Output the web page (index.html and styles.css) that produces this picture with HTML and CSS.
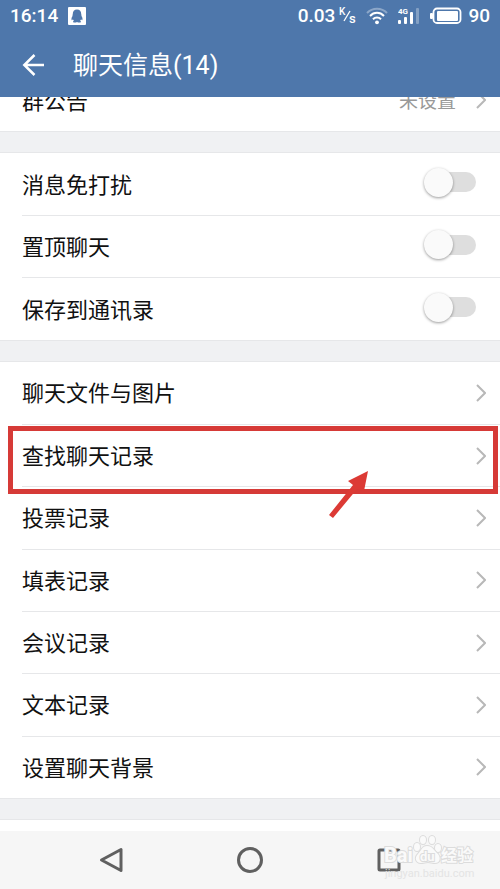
FILE: index.html
```
<!DOCTYPE html>
<html lang="zh-CN">
<head>
    <meta charset="UTF-8">
    <meta name="viewport" content="width=device-width, initial-scale=1.0">
    <title>聊天信息</title>
    <link rel="stylesheet" href="styles.css">
</head>
<body>

<header class="header">
  <div class="status-bar">
    <span>16:14</span>
    <svg class="qq" width="18" height="18" viewBox="0 0 18 18">
      <path fill="#fff" d="M1 0h16a1 1 0 0 1 1 1v16a1 1 0 0 1-1 1H1a1 1 0 0 1-1-1V1a1 1 0 0 1 1-1z"/>
      <path fill="#4e77ab" d="M9 2.500C6.200 2.500 4.700 4.500 4.800 7.100c-.3 1-.4 1.500-.2 2C3.500 10.500 3.200 12 3.700 13.200c.5 0 .8-.3 1.200-.9.2.6.6 1.100 1 1.500-.7.3-1 .8-.7 1.400.8.6 2.800.5 3.800-.2 1 .7 3 .8 3.800.2.3-.6 0-1.100-.7-1.400.4-.4.8-.9 1-1.500.4.6.7.9 1.200.9.5-1.200.2-2.700-.9-4.100.2-.5.1-1-.2-2C13.300 4.500 11.800 2.500 9 2.500z"/>
    </svg>
    <span class="speed">0.03</span>
    <svg class="unit" width="18" height="18" viewBox="0 0 18 18" aria-label="K/s">
      <text x="0" y="8" font-size="10">K</text>
      <path d="M5 14L11 4" stroke="#fff" stroke-width="1.300"/>
      <text x="10" y="16" font-size="13">s</text>
    </svg>
    <svg class="wifi" width="22" height="18" viewBox="0 0 22 18" fill="none" stroke="#fff" stroke-width="2">
      <path opacity=".35" d="M1 6C6.500.3 15.500.3 21 6"/>
      <path d="M4 9c4-4.200 10-4.200 14 0"/>
      <path d="M7 12.300c2.300-2.400 5.700-2.400 8 0"/>
      <circle cx="11" cy="15.300" r="1.900" fill="#fff" stroke="none"/>
    </svg>
    <svg class="signal" width="22" height="18" viewBox="0 0 22 18">
      <text x="0" y="7" font-size="8">4G</text>
      <rect x="0" y="13" width="3" height="4" rx="1" fill="#fff"/>
      <rect x="6" y="10" width="3" height="7" rx="1" fill="#fff"/>
      <rect x="12" y="5" width="3" height="12" rx="1" fill="#fff"/>
      <rect x="18" y="1" width="3" height="16" rx="1" fill="#fff" opacity=".3"/>
    </svg>
    <svg class="battery" width="32" height="18" viewBox="0 0 32 18">
      <path d="M7 1.500h20a3.500 3.500 0 0 1 3.500 3.500v7.500a3.500 3.500 0 0 1-3.500 3.500H7a3.500 3.500 0 0 1-3.500-3.500V5A3.500 3.500 0 0 1 7 1.500z" fill="none" stroke="#fff" stroke-width="1.800"/>
      <rect x="0" y="6" width="3" height="6" rx="1" fill="#fff"/>
      <rect x="7" y="4" width="21" height="10" rx="1" fill="#fff"/>
    </svg>
    <span>90</span>
  </div>
  <div class="title-bar">
    <button class="back" type="button" aria-label="返回">
      <svg width="24" height="24" viewBox="0 0 24 24" fill="none" stroke="#fff" stroke-width="2.500">
        <path d="M22 11H2M12.500 1L2.300 11l10.200 10"/>
      </svg>
    </button>
    <h1>聊天信息(14)</h1>
  </div>
</header>

<main class="list">
  <section class="group notice">
    <a class="row" href="#"><span class="name">群公告</span> <span class="value">未设置</span><svg class="arrow" viewBox="0 0 10 18"><path d="M1 1l8 8-8 8"/></svg></a>
  </section>

  <section class="group switches">
    <label class="row"><span class="name">消息免打扰</span> <input class="switch" type="checkbox"></label>
    <label class="row"><span class="name">置顶聊天</span> <input class="switch" type="checkbox"></label>
    <label class="row"><span class="name">保存到通讯录</span> <input class="switch" type="checkbox"></label>
  </section>

  <section class="group links">
    <a class="row" href="#"><span class="name">聊天文件与图片</span> <svg class="arrow" viewBox="0 0 10 18"><path d="M1 1l8 8-8 8"/></svg></a>
    <a class="row marked" href="#"><span class="name">查找聊天记录</span> <svg class="arrow" viewBox="0 0 10 18"><path d="M1 1l8 8-8 8"/></svg>
      <svg class="pointer" width="40" height="48" viewBox="0 0 40 48"><path fill="#dc3a35" d="M39 1l-4 20-7-2L4 48l-4-3 24-30-5-4z"/></svg>
    </a>
    <a class="row" href="#"><span class="name">投票记录</span> <svg class="arrow" viewBox="0 0 10 18"><path d="M1 1l8 8-8 8"/></svg></a>
    <a class="row" href="#"><span class="name">填表记录</span> <svg class="arrow" viewBox="0 0 10 18"><path d="M1 1l8 8-8 8"/></svg></a>
    <a class="row" href="#"><span class="name">会议记录</span> <svg class="arrow" viewBox="0 0 10 18"><path d="M1 1l8 8-8 8"/></svg></a>
    <a class="row" href="#"><span class="name">文本记录</span> <svg class="arrow" viewBox="0 0 10 18"><path d="M1 1l8 8-8 8"/></svg></a>
    <a class="row" href="#"><span class="name">设置聊天背景</span> <svg class="arrow" viewBox="0 0 10 18"><path d="M1 1l8 8-8 8"/></svg></a>
  </section>

  <section class="group next"></section>
</main>

<nav class="nav-bar">
  <button type="button" aria-label="后退">
    <svg width="26" height="26" viewBox="0 0 26 26"><path d="M23 2.500v21L3.500 13z"/></svg>
  </button>
  <button type="button" aria-label="主页">
    <svg width="26" height="26" viewBox="0 0 26 26"><circle cx="13" cy="13" r="11.500"/></svg>
  </button>
  <button type="button" aria-label="最近任务">
    <svg width="26" height="26" viewBox="0 0 26 26"><rect x="3" y="3" width="20" height="20" rx="1"/></svg>
  </button>

  <!-- watermark -->
  <svg class="watermark" width="92" height="46" viewBox="0 0 92 46">
    <g class="logo">
      <text x="0" y="28" font-size="20">Bai</text>
      <ellipse cx="33" cy="13" rx="3" ry="4"/>
      <ellipse cx="39" cy="6" rx="3" ry="4"/>
      <ellipse cx="48" cy="6" rx="3" ry="4"/>
      <ellipse cx="54" cy="14" rx="3" ry="4"/>
      <path d="M43 12c-5 0-6 5-9 8-4 4-2 9 3 9 3 0 4-1 7-1s4 1 7 1c5 0 6-5 3-9-4-3-5-8-11-8z"/>
      <text x="36" y="27" font-size="13">du</text>
      <text x="57" y="27" font-size="16">经验</text>
    </g>
    <text class="url" x="1" y="43" font-size="11">jingyan.baidu.com</text>
  </svg>
</nav>

</body>
</html>
```
FILE: styles.css
```
* {
  box-sizing: border-box;
}

body {
  margin: 0;
  min-height: 100vh;
  display: flex;
  flex-direction: column;
  background: #f0f1f3;
  color: #111;
  font-family: Roboto, 'Noto Sans CJK SC', sans-serif;
}

button {
  padding: 0;
  border: none;
  background: none;
  display: flex;
  cursor: pointer;
}

/* Header */
.header {
  position: relative;
  z-index: 5;
  background: #4e77ab;
  color: #fff;
}

.status-bar {
  height: 32px;
  padding: 0 10px;
  display: flex;
  align-items: center;
  font-size: 19px;
  font-weight: 500;
  line-height: 32px;
}
.status-bar text {
  fill: #fff;
}
.qq {
  margin-left: 10px;
}
.speed {
  margin-left: auto;
}
.unit {
  margin-left: 4px;
}
.wifi {
  margin-left: 9px;
}
.signal {
  margin-left: 10px;
  font-weight: 700;
}
.battery {
  margin: 0 6px 0 10px;
}

.title-bar {
  height: 65px;
  padding: 2px 22px 0;
  display: flex;
  align-items: center;
  gap: 27px;
}
.title-bar h1 {
  margin: 0;
  font-size: 25px;
  font-weight: 400;
  line-height: 36px;
}

/* Settings list */
.list {
  flex: 1;
  display: flex;
  flex-direction: column;
  gap: 22px;
}

.group {
  display: flex;
  flex-direction: column;
  background: #fff;
  box-shadow: 0 0 0 1px #e6e7e9;
}
.switches {
  flex: 3;
}
.links {
  flex: 7;
}
.next {
  min-height: 11px;
}

/* scrolled partly under the header */
.notice {
  margin-top: -28px;
}

.row {
  position: relative;
  flex: 1 0 auto;
  min-height: 62px;
  margin-left: 22px;
  padding-right: 14px;
  display: flex;
  align-items: center;
  font-size: 22px;
  line-height: 32px;
  color: inherit;
  text-decoration: none;
}
.row + .row {
  border-top: 1px solid #e6e7e9;
}

.name,
.value {
  padding-top: 3px;
}
.value {
  margin-left: auto;
  margin-right: 20px;
  font-size: 19px;
  color: #999;
}

.arrow {
  width: 10px;
  height: 18px;
  margin-left: auto;
  fill: none;
  stroke: #b8b8b8;
  stroke-width: 2;
}
.value + .arrow {
  margin-left: 0;
}

.switch {
  appearance: none;
  width: 46px;
  height: 20px;
  margin: 0 10px 4px auto;
  display: flex;
  align-items: center;
  background: #dedede;
  border-radius: 10px;
  cursor: pointer;
}
.switch::before {
  content: '';
  width: 29px;
  height: 29px;
  margin-left: -6px;
  border-radius: 50%;
  background: #fafafa;
  box-shadow: 0 1px 3px rgba(0, 0, 0, 0.4);
}
.switch:checked::before {
  margin-left: auto;
}

/* Red frame and pointer over the search row */
.marked::after {
  content: '';
  position: absolute;
  inset: 1px 2px -8px -14px;
  border: 5px solid #d63a37;
  z-index: 1;
}
.pointer {
  position: absolute;
  top: 45px;
  right: 131px;
  z-index: 2;
}

/* System navigation */
.nav-bar {
  position: relative;
  height: 58px;
  display: flex;
  justify-content: center;
  align-items: center;
  gap: 113px;
  background: #f6f6f6;
}
.nav-bar button svg {
  fill: none;
  stroke: #606060;
  stroke-width: 3;
  stroke-linejoin: round;
}

.watermark {
  position: absolute;
  top: 3px;
  right: 24px;
  overflow: visible;
  pointer-events: none;
}
.logo {
  fill: #fafafa;
  stroke: #dcdcdc;
  stroke-width: 2;
  paint-order: stroke;
  font-weight: 700;
}
.url {
  fill: #e4e4e4;
}
```
